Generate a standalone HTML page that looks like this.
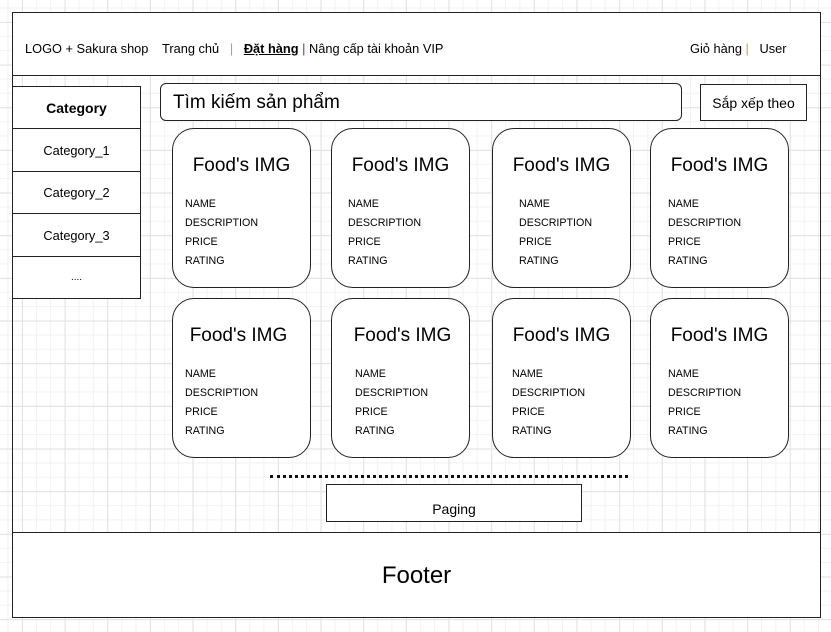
<!DOCTYPE html>
<html><head><meta charset="utf-8"><style>
html,body{margin:0;padding:0}
body{width:831px;height:632px;position:relative;overflow:hidden;background-color:#fff;
background-image:
linear-gradient(#e2e2e2 1px,transparent 1px),
linear-gradient(90deg,#e2e2e2 1px,transparent 1px),
linear-gradient(#f2f2f2 1px,transparent 1px),
linear-gradient(90deg,#f2f2f2 1px,transparent 1px);
background-size:42.67px 42.67px,42.67px 42.67px,14.22px 14.22px,14.22px 14.22px;
background-position:0 22px,22px 0,0 7.5px,7.5px 0;
font-family:"Liberation Sans","Noto Sans CJK SC",sans-serif;color:#000}
.a{position:absolute;box-sizing:border-box}
.b{border:1.5px solid #222;background:#fff}
.t{position:absolute;white-space:nowrap}
.card{position:absolute;box-sizing:border-box;border:1.5px solid #222;border-radius:22px;background:#fff;width:139px;height:160px}
.card .h{position:absolute;top:26px;width:100%;text-align:center;font-size:19px}
.card .l{position:absolute;font-size:10.7px;line-height:19px;top:66px}
</style></head><body>
<div class="a" style="left:12px;top:12px;width:809px;height:606px;border:1.5px solid #222;background:transparent"></div>
<div class="a b" style="left:12px;top:12px;width:809px;height:64px"></div>
<div class="t" style="left:25px;top:41px;font-size:12.8px">LOGO + Sakura shop</div>
<div class="t" style="left:162px;top:41px;font-size:12.8px">Trang chủ &nbsp;&nbsp;<span style="color:#d99a2b">|</span>&nbsp;&nbsp; <b style="text-decoration:underline">Đặt hàng</b> <span style="color:#7a1f7a">|</span> Nâng cấp tài khoản VIP</div>
<div class="t" style="left:690px;top:41px;font-size:12.8px">Giỏ hàng <span style="color:#d99a2b">|</span>&nbsp;&nbsp; User</div>

<div class="a b" style="left:12px;top:86px;width:129px;height:213px"></div>
<div class="a" style="left:12px;top:128px;width:129px;border-top:1.5px solid #222"></div>
<div class="a" style="left:12px;top:171px;width:129px;border-top:1.5px solid #222"></div>
<div class="a" style="left:12px;top:213px;width:129px;border-top:1.5px solid #222"></div>
<div class="a" style="left:12px;top:256px;width:129px;border-top:1.5px solid #222"></div>
<div class="t" style="left:12px;width:129px;text-align:center;top:100px;font-size:14px;font-weight:bold">Category</div>
<div class="t" style="left:12px;width:129px;text-align:center;top:143px;font-size:12.8px">Category_1</div>
<div class="t" style="left:12px;width:129px;text-align:center;top:185px;font-size:12.8px">Category_2</div>
<div class="t" style="left:12px;width:129px;text-align:center;top:228px;font-size:12.8px">Category_3</div>
<div class="t" style="left:12px;width:129px;text-align:center;top:272px;font-size:10px">....</div>

<div class="a b" style="left:160px;top:83px;width:522px;height:38px;border-radius:6px"></div>
<div class="t" style="left:173px;top:92px;font-size:19px">Tìm kiếm sản phẩm</div>
<div class="a b" style="left:700px;top:84px;width:107px;height:37px"></div>
<div class="t" style="left:700px;width:107px;text-align:center;top:95px;font-size:14px">Sắp xếp theo</div>

<div class="card" style="left:172px;top:128px"><div class="h" style="left:0">Food's IMG</div><div class="l" style="left:12px">NAME<br>DESCRIPTION<br>PRICE<br>RATING</div></div>
<div class="card" style="left:331px;top:128px"><div class="h" style="left:0">Food's IMG</div><div class="l" style="left:16px">NAME<br>DESCRIPTION<br>PRICE<br>RATING</div></div>
<div class="card" style="left:492px;top:128px"><div class="h" style="left:0">Food's IMG</div><div class="l" style="left:26px">NAME<br>DESCRIPTION<br>PRICE<br>RATING</div></div>
<div class="card" style="left:650px;top:128px"><div class="h" style="left:0">Food's IMG</div><div class="l" style="left:17px">NAME<br>DESCRIPTION<br>PRICE<br>RATING</div></div>
<div class="card" style="left:172px;top:298px"><div class="h" style="left:-3px">Food's IMG</div><div class="l" style="left:12px">NAME<br>DESCRIPTION<br>PRICE<br>RATING</div></div>
<div class="card" style="left:331px;top:298px"><div class="h" style="left:2px">Food's IMG</div><div class="l" style="left:23px">NAME<br>DESCRIPTION<br>PRICE<br>RATING</div></div>
<div class="card" style="left:492px;top:298px"><div class="h" style="left:0">Food's IMG</div><div class="l" style="left:19px">NAME<br>DESCRIPTION<br>PRICE<br>RATING</div></div>
<div class="card" style="left:650px;top:298px"><div class="h" style="left:0">Food's IMG</div><div class="l" style="left:17px">NAME<br>DESCRIPTION<br>PRICE<br>RATING</div></div>

<div class="a" style="left:270px;top:475px;width:358px;border-top:3px dotted #111"></div>
<div class="a b" style="left:326px;top:484px;width:256px;height:38px"></div>
<div class="t" style="left:326px;width:256px;text-align:center;top:501px;font-size:14px">Paging</div>

<div class="a b" style="left:12px;top:532px;width:809px;height:86px"></div>
<div class="t" style="left:12px;width:809px;text-align:center;top:562px;font-size:24px">Footer</div>
</body></html>
